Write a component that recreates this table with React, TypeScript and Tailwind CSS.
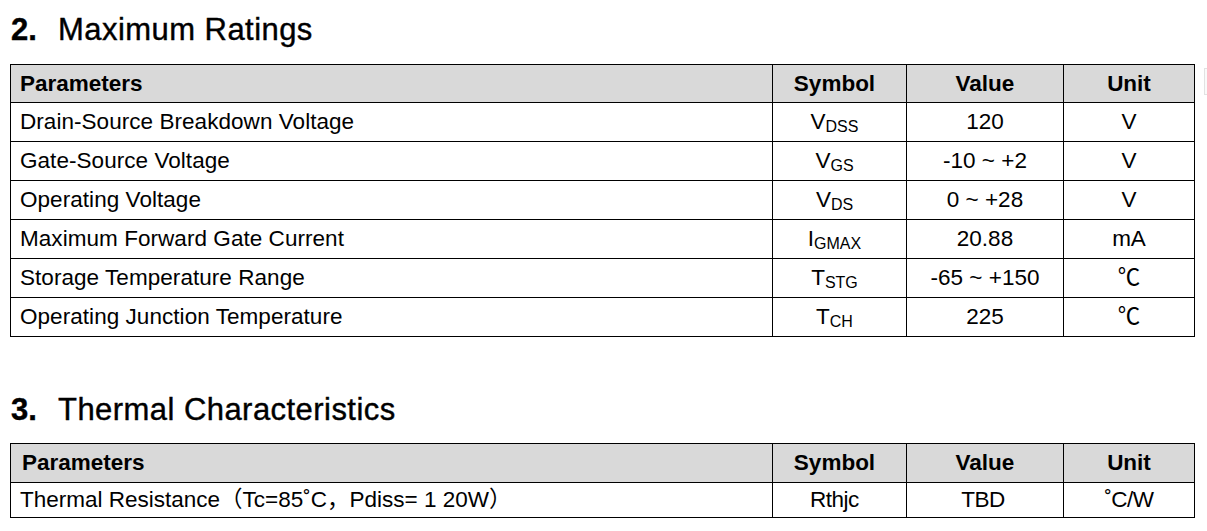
import React from "react";

const font = { fontFamily: '"Liberation Sans", Arial, "Noto Sans CJK SC", sans-serif' };

type Row = { param: string; sym: string; sub?: string; value: string; unit: string };

const ratings: Row[] = [
  { param: "Drain-Source Breakdown Voltage", sym: "V", sub: "DSS", value: "120", unit: "V" },
  { param: "Gate-Source Voltage", sym: "V", sub: "GS", value: "-10 ~ +2", unit: "V" },
  { param: "Operating Voltage", sym: "V", sub: "DS", value: "0 ~ +28", unit: "V" },
  { param: "Maximum Forward Gate Current", sym: "I", sub: "GMAX", value: "20.88", unit: "mA" },
  { param: "Storage Temperature Range", sym: "T", sub: "STG", value: "-65 ~ +150", unit: "℃" },
  { param: "Operating Junction Temperature", sym: "T", sub: "CH", value: "225", unit: "℃" },
];

const cols = "grid grid-cols-[762px_134px_157px_131px]";
const cell = "flex items-center border-r border-b border-black";

function Heading({ num, title }: { num: string; title: string }) {
  return (
    <h2 className="flex items-baseline pl-[11px] text-[31px] leading-[36px] text-black [-webkit-text-stroke:0.4px_black]">
      <span className="font-bold w-[47px]">{num}</span>
      <span className="tracking-[0.45px]">{title}</span>
    </h2>
  );
}

function HeaderRow({ h, padLeft }: { h: string; padLeft: string }) {
  return (
    <div className={`${cols} font-bold text-[22.5px] ${h}`}>
      <div className={`${cell} ${padLeft} bg-[#d9d9d9]`}>Parameters</div>
      <div className={`${cell} justify-center bg-[#d9d9d9] pr-[10px]`}>Symbol</div>
      <div className={`${cell} justify-center bg-[#d9d9d9]`}>Value</div>
      <div className={`${cell} justify-center bg-[#d9d9d9]`}>Unit</div>
    </div>
  );
}

export default function App() {
  return (
    <div className="relative w-[1207px] h-[531px] bg-white text-black overflow-hidden pt-[12px]" style={font}>
      <Heading num="2." title="Maximum Ratings" />

      {/* Maximum ratings table */}
      <div className="mt-[16px] ml-[10px] w-[1185px] border-l border-t border-black">
        <HeaderRow h="h-[38px]" padLeft="pl-[9px]" />
        {ratings.map((r) => (
          <div key={r.param} className={`${cols} h-[39px] text-[22.5px]`}>
            <div className={`${cell} pl-[9px] tracking-[0.05px]`}>{r.param}</div>
            <div className={`${cell} justify-center pr-[10px]`}>
              <span>
                {r.sym}
                <span className="relative top-[3px] text-[16px]">{r.sub}</span>
              </span>
            </div>
            <div className={`${cell} justify-center`}>{r.value}</div>
            <div className={`${cell} justify-center`}>{r.unit}</div>
          </div>
        ))}
      </div>

      <div className="mt-[55px]">
        <Heading num="3." title="Thermal Characteristics" />
      </div>

      {/* Thermal table */}
      <div className="mt-[15px] ml-[10px] w-[1185px] border-l border-t border-black">
        <HeaderRow h="h-[39px]" padLeft="pl-[11px]" />
        <div className={`${cols} h-[35px] text-[22.5px]`}>
          <div className={`${cell} pl-[9px]`}>
            Thermal Resistance（Tc=85˚C，Pdiss= 1 20W）
          </div>
          <div className={`${cell} justify-center pr-[10px] tracking-[-0.5px]`}>Rthjc</div>
          <div className={`${cell} justify-center pr-[4px] tracking-[-0.5px]`}>TBD</div>
          <div className={`${cell} justify-center tracking-[-0.5px]`}>˚C/W</div>
        </div>
      </div>

      {/* stray widget edge at the right */}
      <div className="absolute left-[1204px] top-[68px] w-[12px] h-[27px] border border-[#e2e2e2] bg-[#fafafa]" />
    </div>
  );
}
